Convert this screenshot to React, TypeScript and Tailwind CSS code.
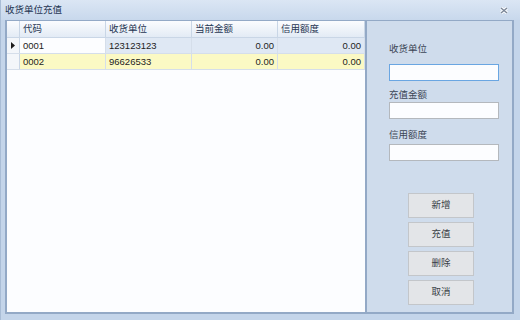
import React from 'react';

const FONT = { fontFamily: '"Liberation Sans", "Noto Sans CJK SC", sans-serif' };

const COLS = [
  { key: 'code', title: '代码', w: 'w-[86px]', right: false },
  { key: 'unit', title: '收货单位', w: 'w-[86px]', right: false },
  { key: 'amount', title: '当前金额', w: 'w-[86px]', right: true },
  { key: 'credit', title: '信用额度', w: 'w-[87px]', right: true },
];

const ROWS = [
  { code: '0001', unit: '123123123', amount: '0.00', credit: '0.00' },
  { code: '0002', unit: '96626533', amount: '0.00', credit: '0.00' },
];

function Field({ label, focused, gap }: { label: string; focused?: boolean; gap: string }) {
  return (
    <div className="flex flex-col">
      <span className={'text-[9.5px] leading-[12px] text-[#3c4656] ' + gap}>{label}</span>
      <div
        className={
          'w-[110px] h-[17px] bg-[#fcfdff] border ' +
          (focused ? 'border-[#6aa6e2]' : 'border-[#b4b8bd]')
        }
      />
    </div>
  );
}

function Btn({ label }: { label: string }) {
  return (
    <button className="w-[66px] h-[25px] bg-[#e3e5e8] border border-[#c3c6ca] text-[9.5px] text-[#3a3f46]">
      {label}
    </button>
  );
}

export default function App() {
  return (
    <div
      className="w-[520px] h-[320px] bg-[#c4d5ea] flex flex-col overflow-hidden border-l border-[#a9bdd6]"
      style={FONT}
    >
      {/* title bar */}
      <div className="h-[20px] flex items-center justify-between pl-[4px] pr-[16px] bg-gradient-to-b from-[#dbe6f4] to-[#c8d8ec]">
        <span className="text-[9.5px] text-[#1f3552]">收货单位充值</span>
        <svg width="8" height="7" viewBox="0 0 8 7" className="mr-[-4px]">
          <path d="M1 1 L7 6 M7 1 L1 6" stroke="#ffffff" strokeWidth="3" />
          <path d="M1 1 L7 6 M7 1 L1 6" stroke="#7a8698" strokeWidth="1.4" />
        </svg>
      </div>

      <div className="flex-1 flex pl-[4px] pr-[6px] pb-[6px]">
        <div className="flex flex-1 border-b-2 border-[#93a9c6]">
          {/* grid */}
          <div className="w-[362px] flex flex-col bg-[#fcfdff] border-l-2 border-t border-r-2 border-[#93a9c6]">
            <div className="flex h-[17px] bg-gradient-to-b from-[#fbfcfe] to-[#e3ebf5] border-b border-[#c9d6e6]">
              <div className="w-[13px] border-r border-[#c9d6e6]" />
              {COLS.map((c) => (
                <div
                  key={c.key}
                  className={c.w + ' border-r border-[#c9d6e6] pl-[3px] text-[9.5px] leading-[16px] text-[#1f3552]'}
                >
                  {c.title}
                </div>
              ))}
            </div>
            {ROWS.map((r, i) => (
              <div
                key={r.code}
                className={
                  'flex h-[16px] border-b border-[#d5deea] ' +
                  (i === 0 ? 'bg-[#dfe8f4]' : 'bg-[#fbf9c4]')
                }
              >
                <div className="w-[13px] bg-[#f3f6fa] border-r border-[#c9d6e6] flex items-center justify-center">
                  {i === 0 && (
                    <svg width="4" height="7" viewBox="0 0 4 7">
                      <path d="M0 0 L4 3.5 L0 7 Z" fill="#1b1b1b" />
                    </svg>
                  )}
                </div>
                {COLS.map((c, j) => (
                  <div
                    key={c.key}
                    className={
                      c.w +
                      ' border-r border-[#d5deea] px-[3px] text-[9.5px] leading-[15px] text-[#1c1c1c] ' +
                      (c.right ? 'text-right ' : '') +
                      (i === 0 && j === 0 ? 'bg-[#fcfdff]' : '')
                    }
                  >
                    {r[c.key as keyof typeof r]}
                  </div>
                ))}
              </div>
            ))}
          </div>

          {/* right panel */}
          <div className="flex-1 bg-[#cfdcec] border-t border-r-2 border-[#93a9c6] flex flex-col items-start pl-[22px] pt-[22px]">
            <Field label="收货单位" focused gap="mb-[9px]" />
            <div className="mt-[8px]">
              <Field label="充值金额" gap="mb-[1px]" />
            </div>
            <div className="mt-[10px]">
              <Field label="信用额度" gap="mb-[3px]" />
            </div>
            <div className="flex flex-col gap-[4px] mt-[32px] ml-[19px]">
              <Btn label="新增" />
              <Btn label="充值" />
              <Btn label="删除" />
              <Btn label="取消" />
            </div>
          </div>
        </div>
      </div>
    </div>
  );
}
